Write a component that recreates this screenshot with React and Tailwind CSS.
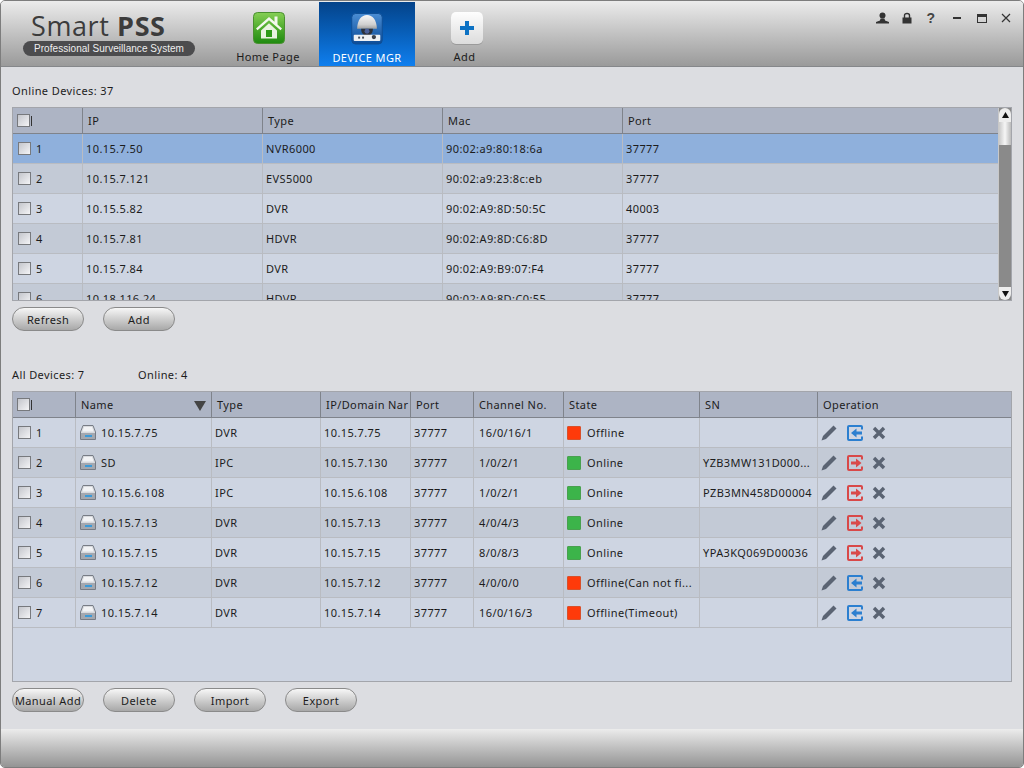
const font = "font-['Noto_Sans',sans-serif]";

const HomeIcon = () => (
  <svg width="32" height="32" viewBox="0 0 32 32">
    <defs>
      <linearGradient id="hg" x1="0" y1="0" x2="0" y2="1">
        <stop offset="0" stopColor="#86cf55" />
        <stop offset="0.55" stopColor="#4aa82a" />
        <stop offset="1" stopColor="#1f8a10" />
      </linearGradient>
    </defs>
    <rect x="0.5" y="0.5" width="31" height="31" rx="4" fill="url(#hg)" stroke="#4a9030" />
    <path d="M3 16.5 L16 5 L21.5 9.8 V4.5 H24.5 V12.5 L29 16.5 L27.5 18.3 L16 8.2 L4.5 18.3 Z" fill="#f4f8ee" />
    <path d="M8 18.5 L16 11.2 L24 18.5 V26.5 H8 Z" fill="#e9f3e0" />
    <rect x="13" y="18" width="6" height="7" fill="#2f9a18" />
  </svg>
);

const CameraIcon = () => (
  <svg width="32" height="32" viewBox="0 0 32 32">
    <defs>
      <linearGradient id="cg" x1="0" y1="0" x2="0" y2="1">
        <stop offset="0" stopColor="#4a8dd4" />
        <stop offset="1" stopColor="#0c4c98" />
      </linearGradient>
      <linearGradient id="dg" x1="0" y1="0" x2="0" y2="1">
        <stop offset="0" stopColor="#f8f8f8" />
        <stop offset="0.7" stopColor="#cfcfcf" />
        <stop offset="1" stopColor="#a0a0a0" />
      </linearGradient>
    </defs>
    <rect x="0.5" y="0.5" width="31" height="31" rx="4" fill="url(#cg)" stroke="#0f4f96" />
    <path d="M6 16 C6 7 10.500 2 16 2 C21.500 2 26 7 26 16 Z" fill="url(#dg)" />
    <path d="M10 16 H22 C22 20.500 19.500 23 16 23 C12.500 23 10 20.500 10 16 Z" fill="#2c313b" />
    <circle cx="16" cy="18.500" r="2.500" fill="#4a5f98" />
    <rect x="2.500" y="22" width="27" height="6.500" rx="1" fill="#eef0f3" />
    <circle cx="23" cy="24.500" r="2.200" fill="#3a3f48" />
    <rect x="7" y="24" width="2" height="2" fill="#4a4f58" />
    <rect x="11" y="24" width="2" height="2" fill="#4a4f58" />
  </svg>
);

const PlusIcon = () => (
  <svg width="32" height="33" viewBox="0 0 32 33">
    <defs>
      <linearGradient id="pg" x1="0" y1="0" x2="0" y2="1">
        <stop offset="0" stopColor="#fefefe" />
        <stop offset="1" stopColor="#dcdcdc" />
      </linearGradient>
    </defs>
    <rect x="0" y="1" width="32" height="32" rx="5" fill="#9a9a9a" />
    <rect x="0" y="0" width="32" height="32" rx="5" fill="url(#pg)" />
    <path d="M14 9 H18 V14 H23 V18 H18 V23 H14 V18 H9 V14 H14 Z" fill="#0d72c4" />
  </svg>
);

const Drive = () => (
  <svg width="16" height="15" viewBox="0 0 16 15" className="shrink-0">
    <path d="M3 0.5 H13 L15.5 7 V14.5 H0.5 V7 Z" fill="#d8dade" stroke="#777c85" />
    <rect x="1" y="8" width="14" height="6" fill="#a3a8b0" />
    <rect x="5" y="10" width="7" height="2" fill="#3c9ad8" />
    <path d="M4 2 H12 L13.5 6.5 H2.5 Z" fill="#f2f3f5" />
  </svg>
);

const Pencil = () => (
  <svg width="16" height="16" viewBox="0 0 16 16">
    <path d="M12.5 0.5 L15.5 3.5 L5 14 L0.5 15.5 L2 11 Z" fill="#5b6473" />
  </svg>
);

const Door = ({ out }) => (
  <svg width="16" height="16" viewBox="0 0 16 16">
    <path d="M15 4.5 V2 Q15 1 14 1 H2 Q1 1 1 2 V14 Q1 15 2 15 H14 Q15 15 15 14 V11.5" fill="none" stroke={out ? '#d94848' : '#2b7fd0'} strokeWidth="2" />
    {out
      ? <path d="M4 6.5 H9 V3.5 L14.5 8 L9 12.5 V9.5 H4 Z" fill="#d94848" />
      : <path d="M15 6.5 H9.5 V3.5 L4 8 L9.5 12.5 V9.5 H15 Z" fill="#2b7fd0" />}
  </svg>
);

const Cross = () => (
  <svg width="14" height="14" viewBox="0 0 14 14" className="-ml-[1px]">
    <path d="M2 2 L12 12 M12 2 L2 12" stroke="#5b6473" strokeWidth="3.4" />
  </svg>
);

const Check = () => (
  <span className="block w-[13px] h-[13px] border border-[#77797d] bg-gradient-to-br from-[#c4c6cc] to-[#f4f4f6] shrink-0" />
);

const Btn = ({ children }) => (
  <button className={`w-[72px] h-[24px] rounded-full border border-[#8a8a8a] bg-gradient-to-b from-[#f7f7f7] to-[#a8a8a8] text-[11px] tracking-[0.4px] text-[#1c1c1c] flex items-center justify-center whitespace-nowrap overflow-hidden pt-[2px] ${font}`}>
    {children}
  </button>
);

const Head = ({ children, cols }) => (
  <div className={`grid h-[26px] bg-[#adb4c4] border-b border-[#7f838b] ${cols}`}>{children}</div>
);

const HCell = ({ children, last, className = '' }) => (
  <div className={`flex items-center pl-[5px] pt-[2px] ${last ? '' : 'border-r border-[#7f838b]'} ${className}`}>{children}</div>
);

const Cell = ({ children, last, className = '' }) => (
  <div className={`flex items-center pl-[3px] overflow-hidden whitespace-nowrap ${last ? '' : 'border-r border-[#b9bcc2]'} ${className}`}>{children}</div>
);

const T = ({ children }) => <span className="relative top-[1px]">{children}</span>;

const topCols = 'grid-cols-[70px_180px_180px_180px_375px]';
const topRows = [
  ['1', '10.15.7.50', 'NVR6000', '90:02:a9:80:18:6a', '37777'],
  ['2', '10.15.7.121', 'EVS5000', '90:02:a9:23:8c:eb', '37777'],
  ['3', '10.15.5.82', 'DVR', '90:02:A9:8D:50:5C', '40003'],
  ['4', '10.15.7.81', 'HDVR', '90:02:A9:8D:C6:8D', '37777'],
  ['5', '10.15.7.84', 'DVR', '90:02:A9:B9:07:F4', '37777'],
  ['6', '10.18.116.24', 'HDVR', '90:02:A9:8D:C0:55', '37777'],
];

const botCols = 'grid-cols-[63px_136px_109px_90px_63px_90px_136px_118px_193px]';
const botRows = [
  ['1', '10.15.7.75', 'DVR', '10.15.7.75', '16/0/16/1', 0, 'Offline', ''],
  ['2', 'SD', 'IPC', '10.15.7.130', '1/0/2/1', 1, 'Online', 'YZB3MW131D000...'],
  ['3', '10.15.6.108', 'IPC', '10.15.6.108', '1/0/2/1', 1, 'Online', 'PZB3MN458D00004'],
  ['4', '10.15.7.13', 'DVR', '10.15.7.13', '4/0/4/3', 1, 'Online', ''],
  ['5', '10.15.7.15', 'DVR', '10.15.7.15', '8/0/8/3', 1, 'Online', 'YPA3KQ069D00036'],
  ['6', '10.15.7.12', 'DVR', '10.15.7.12', '4/0/0/0', 0, 'Offline(Can not fi...', ''],
  ['7', '10.15.7.14', 'DVR', '10.15.7.14', '16/0/16/3', 0, 'Offline(Timeout)', ''],
];

const stripe = (i) => (i % 2 === 0 ? 'bg-[#ced5e2]' : 'bg-[#c3cad6]');

export default function App() {
  return (
    <div className={`w-[1024px] h-[768px] flex flex-col bg-[#dcdde1] overflow-hidden border border-[#7d7d7d] rounded-t-[5px] rounded-b-[5px] text-[11px] tracking-[0.4px] text-[#1c1c1c] ${font}`}>
      <header className="h-[66px] shrink-0 flex bg-gradient-to-b from-[#ececec] to-[#9a9a9a] border-b border-[#85878a] relative">
        <div className="w-[219px] shrink-0 flex flex-col pl-[22px] pt-[10px]">
          <div className="text-[27px] leading-[30px] tracking-[0.6px] text-[#3c3c3c] pl-[8px] font-['Open_Sans',sans-serif]">
            Smart <b className="font-bold">PSS</b>
          </div>
          <div className="w-[172px] h-[15px] rounded-full bg-[#4c4c4e] text-[#eee] text-[10px] tracking-[0.05px] flex items-center justify-center font-['Liberation_Sans',sans-serif]">
            Professional Surveillance System
          </div>
        </div>
        <div className="w-[99px] shrink-0 flex flex-col items-center pt-[11px] pr-[3px]">
          <span className="relative left-[1px]"><HomeIcon /></span>
          <span className="mt-[5px]">Home Page</span>
        </div>
        <div className="w-[96px] shrink-0 flex flex-col items-center pt-[11px] mt-[1px] bg-gradient-to-b from-[#04438a] to-[#0f7fef] text-white">
          <CameraIcon />
          <span className="mt-[5px]">DEVICE MGR</span>
        </div>
        <div className="w-[99px] shrink-0 flex flex-col items-center pt-[11px]">
          <span className="relative left-[2px] h-[32px]"><PlusIcon /></span>
          <span className="mt-[5px]">Add</span>
        </div>
        <div className="ml-auto flex items-start gap-[12px] pt-[11px] pr-[11px] text-[#333]">
          <svg width="13" height="12" viewBox="0 0 13 12"><circle cx="6.5" cy="3.5" r="3" fill="#333" /><path d="M4.5 6.5 H8.5 L9 8.5 L13 10 V11.5 H0 V10 L4 8.5 Z" fill="#333" /></svg>
          <svg width="12" height="12" viewBox="0 0 12 12"><path d="M3.5 6 V3.5 Q3.5 1.5 6 1.5 Q8.500 1.500 8.500 3.500 V6" fill="none" stroke="#333" strokeWidth="1.4" /><rect x="1.5" y="5.500" width="9" height="6" fill="#333" /></svg>
          <span className="w-[12px] h-[12px] flex items-center justify-center text-[14px] font-bold text-[#444] font-['Liberation_Sans',sans-serif]">?</span>
          <svg width="12" height="12" viewBox="0 0 12 12" className="ml-[2px] mr-[1px]"><rect x="2" y="5" width="8" height="2" fill="#333" /></svg>
          <svg width="12" height="12" viewBox="0 0 12 12"><rect x="1.5" y="2.500" width="9" height="8" fill="none" stroke="#333" /><rect x="1" y="2" width="10" height="3" fill="#333" /></svg>
          <svg width="12" height="12" viewBox="0 0 12 12"><path d="M2 2 L10 10 M10 2 L2 10" stroke="#333" strokeWidth="1.2" /></svg>
        </div>
      </header>

      <main className="flex-1 flex flex-col pl-[11px] pr-[11px]">
        <div className="h-[40px] flex items-end pb-[9px]"><span className="leading-[14px]">Online Devices: 37</span></div>

        <div className="h-[194px] border border-[#a3a5ab] flex overflow-hidden">
          <div className="w-[985px] shrink-0">
            <Head cols={topCols}>
              <HCell className="!pl-[4px] !pt-0"><Check /><span className="ml-[1px] w-px h-[10px] bg-[#333]" /></HCell>
              <HCell>IP</HCell><HCell>Type</HCell><HCell>Mac</HCell><HCell last>Port</HCell>
            </Head>
            {topRows.map((r, i) => (
              <div key={r[0]} className={`grid h-[30px] border-b border-[#b9bcc2] ${topCols} ${i === 0 ? 'bg-[#8fb0dc]' : i % 2 === 1 ? 'bg-[#c3cad6]' : 'bg-[#ced5e2]'}`}>
                <Cell className="!pl-[5px] gap-[5px]"><Check /><T>{r[0]}</T></Cell>
                <Cell><T>{r[1]}</T></Cell><Cell><T>{r[2]}</T></Cell><Cell><T>{r[3]}</T></Cell><Cell last><T>{r[4]}</T></Cell>
              </div>
            ))}
          </div>
          <div className="w-[13px] shrink-0 flex flex-col bg-[#8a8a8a] border-l border-[#c8c8c8]">
            <div className="h-[14px] rounded-t-full bg-[#ededed] flex items-center justify-center">
              <svg width="7" height="6" viewBox="0 0 7 6"><path d="M3.5 0 L7 6 H0 Z" fill="#111" /></svg>
            </div>
            <div className="h-[23px] bg-gradient-to-r from-[#c8c8c8] via-[#f6f6f6] to-[#bbbbbb]" />
            <div className="flex-1" />
            <div className="h-[13px] rounded-b-full bg-[#ededed] flex items-center justify-center">
              <svg width="7" height="6" viewBox="0 0 7 6"><path d="M0 0 H7 L3.5 6 Z" fill="#111" /></svg>
            </div>
          </div>
        </div>

        <div className="flex gap-[19px] mt-[6px]"><Btn>Refresh</Btn><Btn>Add</Btn></div>

        <div className="h-[60px] flex items-end pb-[9px]">
          <span className="leading-[14px] w-[126px]">All Devices: 7</span>
          <span className="leading-[14px]">Online: 4</span>
        </div>

        <div className="h-[291px] w-[1000px] border border-[#a3a5ab] bg-[#ced5e2] overflow-hidden">
          <Head cols={botCols}>
            <HCell className="!pl-[4px] !pt-0"><Check /><span className="ml-[1px] w-px h-[10px] bg-[#333]" /></HCell>
            <HCell className="justify-between pr-[5px]">Name
              <svg width="12" height="10" viewBox="0 0 12 10"><path d="M0 0 H12 L6 10 Z" fill="#444" /></svg>
            </HCell>
            <HCell>Type</HCell>
            <HCell className="overflow-hidden whitespace-nowrap">IP/Domain Nar</HCell>
            <HCell>Port</HCell><HCell>Channel No.</HCell><HCell>State</HCell><HCell>SN</HCell><HCell last>Operation</HCell>
          </Head>
          {botRows.map((r, i) => (
            <div key={r[0]} className={`grid h-[30px] border-b border-[#b9bcc2] ${botCols} ${stripe(i)}`}>
              <Cell className="!pl-[5px] gap-[5px]"><Check /><T>{r[0]}</T></Cell>
              <Cell className="gap-[5px] !pl-[4px]"><Drive /><T>{r[1]}</T></Cell>
              <Cell><T>{r[2]}</T></Cell><Cell><T>{r[3]}</T></Cell><Cell><T>37777</T></Cell><Cell className="!pl-[5px]"><T>{r[4]}</T></Cell>
              <Cell className="gap-[6px] !pl-[3px]">
                <span className={`w-[14px] h-[14px] shrink-0 rounded-[1px] border ${r[5] ? 'bg-[#3cb44a] border-[#49a04f]' : 'bg-[#ff3a0a] border-[#d8502a]'}`} />
                <T>{r[6]}</T>
              </Cell>
              <Cell><T>{r[7]}</T></Cell>
              <Cell last className="gap-[10px] !pl-[3px]">
                <Pencil /><Door out={r[5] === 1} /><Cross />
              </Cell>
            </div>
          ))}
        </div>

        <div className="flex gap-[19px] mt-[6px]"><Btn>Manual Add</Btn><Btn>Delete</Btn><Btn>Import</Btn><Btn>Export</Btn></div>
      </main>

      <footer className="h-[38px] shrink-0 bg-gradient-to-b from-[#ececec] to-[#949494]" />
    </div>
  );
}
